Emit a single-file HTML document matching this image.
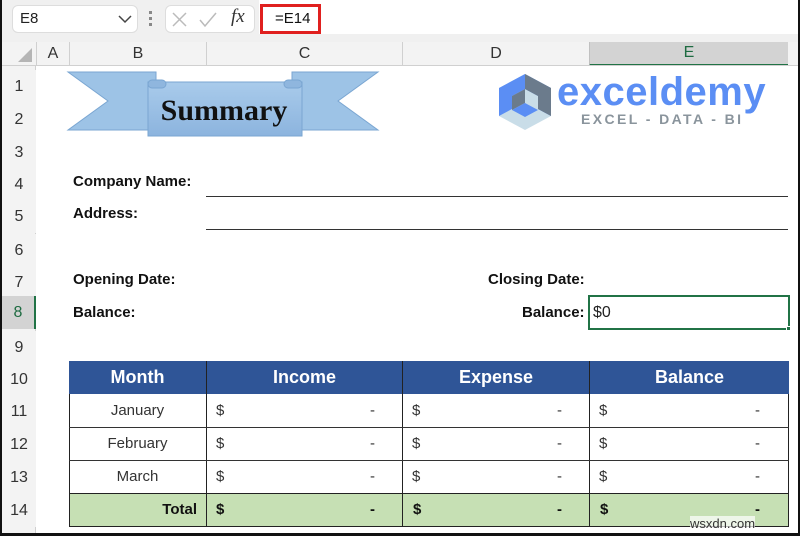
<!DOCTYPE html>
<html><head><meta charset="utf-8"><style>
*{margin:0;padding:0;box-sizing:border-box}
body{width:800px;height:536px;overflow:hidden;background:#fff;font-family:"Liberation Sans",Arial,sans-serif;position:relative}
.a{position:absolute}
.hdr{background:#f3f3f3;color:#333;font-size:16px;text-align:center}
.b{font-weight:bold;font-size:15px;color:#111}
.th{background:#2f5597;color:#fff;font-weight:bold;font-size:18px;text-align:center;line-height:33px}
.td{font-size:15px;color:#333;line-height:33px}
</style></head><body>
<div class="a" style="left:0;top:0;width:800px;height:42px;background:#f0f0f0"></div>
<div class="a" style="left:12px;top:5px;width:126px;height:28px;background:#fff;border:1px solid #ddd;border-radius:6px;font-size:15px;line-height:26px;padding-left:7px;color:#222">E8</div>
<svg class="a" style="left:117px;top:14px" width="16" height="10"><path d="M2 2 L8 8 L14 2" stroke="#444" stroke-width="1.5" fill="none"/></svg>
<div class="a" style="left:149px;top:11px;width:3px;height:3px;background:#888"></div>
<div class="a" style="left:149px;top:17px;width:3px;height:3px;background:#888"></div>
<div class="a" style="left:149px;top:23px;width:3px;height:3px;background:#888"></div>
<div class="a" style="left:165px;top:5px;width:90px;height:28px;background:#fff;border:1px solid #ddd;border-radius:6px"></div>
<svg class="a" style="left:170px;top:10px" width="50" height="20"><path d="M3 3 L16 16 M16 3 L3 16" stroke="#bbb" stroke-width="1.5"/><path d="M30 10 L35 16 L46 3" stroke="#bbb" stroke-width="1.5" fill="none"/></svg>
<div class="a" style="left:231px;top:6px;font-family:'Liberation Serif',serif;font-style:italic;font-size:19px;color:#333">fx</div>
<div class="a" style="left:259px;top:0;width:541px;height:34px;background:#fff"></div>
<div class="a" style="left:260px;top:4px;width:61px;height:30px;border:3px solid #e0201f;font-size:15px;line-height:24px;padding-left:12px;color:#111">=E14</div>
<div class="a hdr" style="left:0;top:42px;width:800px;height:24px;border-bottom:1px solid #d0d0d0"></div>
<svg class="a" style="left:16px;top:47px" width="18" height="16"><path d="M16 1 L16 15 L2 15 Z" fill="#b5b5b5"/></svg>
<div class="a hdr" style="left:36px;top:42px;width:33px;height:24px;line-height:24px;border-left:1px solid #d0d0d0">A</div>
<div class="a hdr" style="left:69px;top:42px;width:137px;height:24px;line-height:24px;border-left:1px solid #d0d0d0">B</div>
<div class="a hdr" style="left:206px;top:42px;width:196px;height:24px;line-height:24px;border-left:1px solid #d0d0d0">C</div>
<div class="a hdr" style="left:402px;top:42px;width:187px;height:24px;line-height:24px;border-left:1px solid #d0d0d0">D</div>
<div class="a hdr" style="left:589px;top:42px;width:199px;height:24px;line-height:22px;background:#d3d3d3;color:#1e6b41;border-left:1px solid #c0c0c0;border-bottom:2px solid #217346">E</div>
<div class="a" style="left:0;top:42px;width:800px;height:24px;border-bottom:1px solid #d0d0d0"></div>
<div class="a" style="left:0;top:66px;width:36px;height:470px;background:#f3f3f3;border-right:1px solid #d0d0d0"></div>
<div class="a" style="left:0;top:0;width:2px;height:536px;background:#111"></div>
<div class="a" style="right:0;top:0;width:2px;height:536px;background:#111"></div>
<div class="a" style="left:0;bottom:0;width:800px;height:3px;background:#111"></div>
<svg class="a" style="left:66px;top:68px" width="316" height="72">
<defs><linearGradient id="g" x1="0" y1="0" x2="0" y2="1"><stop offset="0" stop-color="#a9cbeb"/><stop offset="1" stop-color="#8cb4de"/></linearGradient></defs>
<path d="M2 4 L90 4 L90 62 L2 62 L42 33 Z" fill="#9dc3e6" stroke="#7aa6d2"/>
<path d="M312 4 L226 4 L226 62 L312 62 L272 33 Z" fill="#9dc3e6" stroke="#7aa6d2"/>
<path d="M82 14 L236 14 L236 68 L82 68 Z" fill="url(#g)" stroke="#7aa6d2"/>
<rect x="82" y="12" width="18" height="8" rx="4" fill="#8fb6de" stroke="#7aa6d2"/>
<rect x="218" y="12" width="18" height="8" rx="4" fill="#8fb6de" stroke="#7aa6d2"/>
</svg>
<div class="a" style="left:140px;top:94px;width:168px;text-align:center;font-family:'Liberation Serif',serif;font-weight:bold;font-size:30px;color:#111">Summary</div>
<svg class="a" style="left:496px;top:72px" width="58" height="60">
<path d="M29 2 L55 16 L55 44 L29 58 L3 44 L3 16 Z" fill="#c9dde8"/>
<path d="M29 2 L55 16 L55 44 L42 37 L42 24 L29 17 L16 24 L16 37 L3 44 L3 16 Z" fill="#5b8ef4"/>
<path d="M29 2 L55 16 L55 44 L42 37 L42 24 L29 17 Z" fill="#6b7b8c"/>
<path d="M16 24 L29 17 L29 31 L16 38 Z" fill="#6b7b8c"/>
<path d="M16 38 L29 31 L42 38 L29 45 Z" fill="#5b8ef4"/>
</svg>
<div class="a" style="left:557px;top:70px;font-weight:bold;font-size:40px;color:#5b8ef4;letter-spacing:0.5px">exceldemy</div>
<div class="a" style="left:581px;top:111px;font-weight:bold;font-size:14px;color:#8a949c;letter-spacing:2.4px">EXCEL - DATA - BI</div>
<div class="a b" style="left:73px;top:173px">Company Name:</div>
<div class="a b" style="left:73px;top:205px">Address:</div>
<div class="a" style="left:206px;top:196px;width:582px;height:1px;background:#333"></div>
<div class="a" style="left:206px;top:229px;width:582px;height:1px;background:#333"></div>
<div class="a b" style="left:73px;top:271px">Opening Date:</div>
<div class="a b" style="left:73px;top:304px">Balance:</div>
<div class="a b" style="left:488px;top:271px">Closing Date:</div>
<div class="a b" style="left:522px;top:304px">Balance:</div>
<div class="a" style="left:588px;top:295px;width:202px;height:35px;border:2px solid #217346;font-size:16px;line-height:31px;padding-left:3px;color:#222">$0</div>
<div class="a" style="left:786px;top:326px;width:5px;height:5px;background:#217346;border:1px solid #fff"></div>
<div class="a" style="left:69px;top:361px;width:720px;height:166px;border:1px solid #222"></div>
<div class="a th" style="left:69px;top:361px;width:137px;height:33px">Month</div>
<div class="a th" style="left:206px;top:361px;width:196px;height:33px;border-left:1px solid #222">Income</div>
<div class="a th" style="left:402px;top:361px;width:187px;height:33px;border-left:1px solid #222">Expense</div>
<div class="a th" style="left:589px;top:361px;width:200px;height:33px;border-left:1px solid #222">Balance</div>
<div class="a" style="left:69px;top:493px;width:720px;height:34px;background:#c6e0b4;border:1px solid #222"></div>
<div class="a td" style="left:69px;top:493px;width:128px;text-align:right;font-weight:bold;color:#111">Total</div>
<div class="a" style="left:206px;top:361px;width:1px;height:166px;background:#222"></div>
<div class="a" style="left:402px;top:361px;width:1px;height:166px;background:#222"></div>
<div class="a" style="left:589px;top:361px;width:1px;height:166px;background:#222"></div>
<div class="a td" style="left:69px;top:394px;width:137px;text-align:center">January</div>
<div class="a td" style="left:69px;top:427px;width:137px;text-align:center">February</div>
<div class="a td" style="left:69px;top:460px;width:137px;text-align:center">March</div>
<div class="a" style="left:69px;top:427px;width:720px;height:1px;background:#333"></div>
<div class="a" style="left:69px;top:460px;width:720px;height:1px;background:#333"></div>
<div class="a td" style="left:216px;top:394px">$</div><div class="a td" style="left:370px;top:394px">-</div>
<div class="a td" style="left:216px;top:427px">$</div><div class="a td" style="left:370px;top:427px">-</div>
<div class="a td" style="left:216px;top:460px">$</div><div class="a td" style="left:370px;top:460px">-</div>
<div class="a td" style="left:412px;top:394px">$</div><div class="a td" style="left:557px;top:394px">-</div>
<div class="a td" style="left:412px;top:427px">$</div><div class="a td" style="left:557px;top:427px">-</div>
<div class="a td" style="left:412px;top:460px">$</div><div class="a td" style="left:557px;top:460px">-</div>
<div class="a td" style="left:599px;top:394px">$</div><div class="a td" style="left:755px;top:394px">-</div>
<div class="a td" style="left:599px;top:427px">$</div><div class="a td" style="left:755px;top:427px">-</div>
<div class="a td" style="left:599px;top:460px">$</div><div class="a td" style="left:755px;top:460px">-</div>
<div class="a td" style="left:216px;top:493px;font-weight:bold;color:#111">$</div><div class="a td" style="left:370px;top:493px;font-weight:bold;color:#111">-</div>
<div class="a td" style="left:413px;top:493px;font-weight:bold;color:#111">$</div><div class="a td" style="left:557px;top:493px;font-weight:bold;color:#111">-</div>
<div class="a td" style="left:600px;top:493px;font-weight:bold;color:#111">$</div><div class="a td" style="left:755px;top:493px;font-weight:bold;color:#111">-</div>
<div class="a" style="left:690px;top:516px;font-size:13px;color:#333;background:rgba(255,255,255,.7)">wsxdn.com</div>
<div class="a hdr" style="left:2px;top:70px;width:34px;line-height:33px">1</div>
<div class="a hdr" style="left:2px;top:103px;width:34px;line-height:33px">2</div>
<div class="a hdr" style="left:2px;top:136px;width:34px;line-height:33px">3</div>
<div class="a hdr" style="left:2px;top:168px;width:34px;line-height:33px">4</div>
<div class="a hdr" style="left:2px;top:200px;width:34px;line-height:33px">5</div>
<div class="a hdr" style="left:2px;top:234px;width:34px;line-height:33px">6</div>
<div class="a hdr" style="left:2px;top:266px;width:34px;line-height:33px">7</div>
<div class="a hdr" style="left:2px;top:296px;width:34px;height:33px;line-height:33px;background:#d3d3d3;color:#1e6b41;border-right:2px solid #217346">8</div>
<div class="a hdr" style="left:2px;top:331px;width:34px;line-height:33px">9</div>
<div class="a hdr" style="left:2px;top:363px;width:34px;line-height:33px">10</div>
<div class="a hdr" style="left:2px;top:395px;width:34px;line-height:33px">11</div>
<div class="a hdr" style="left:2px;top:428px;width:34px;line-height:33px">12</div>
<div class="a hdr" style="left:2px;top:461px;width:34px;line-height:33px">13</div>
<div class="a hdr" style="left:2px;top:494px;width:34px;line-height:33px">14</div>
</body></html>
